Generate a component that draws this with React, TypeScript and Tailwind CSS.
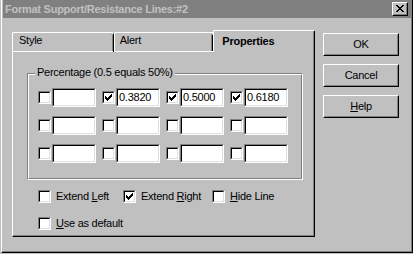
import React from 'react';

const CHECK = ['......X', '.....XX', 'X...XXX', 'XX.XXX.', 'XXXXX..', '.XXX...', '..X....'];

const CheckMark = () => (
  <svg width="7" height="7" viewBox="0 0 7 7" shapeRendering="crispEdges">
    {CHECK.flatMap((row, y) =>
      row.split('').map((c, x) =>
        c === 'X' ? <rect key={`${x}-${y}`} x={x} y={y} width="1" height="1" fill="#000" /> : null
      )
    )}
  </svg>
);

const Checkbox = ({ checked }: { checked?: boolean }) => (
  <div className="w-[13px] h-[13px] shrink-0 border border-t-[#808080] border-l-[#808080] border-r-white border-b-white">
    <div className="w-full h-full border border-t-black border-l-black border-r-[#dfdfdf] border-b-[#dfdfdf] bg-white flex items-center justify-center">
      {checked && <CheckMark />}
    </div>
  </div>
);

const Edit = ({ value }: { value?: string }) => (
  <div className="w-[44px] h-[19px] border border-t-[#808080] border-l-[#808080] border-r-white border-b-white">
    <div className="w-full h-full border border-t-black border-l-black border-r-[#dfdfdf] border-b-[#dfdfdf] bg-white pl-px text-[11px] leading-[15px]">
      {value}
    </div>
  </div>
);

const Button = ({ children }: { children: React.ReactNode }) => (
  <div className="w-[76px] h-[23px] border border-t-white border-l-white border-r-black border-b-black">
    <div className="w-full h-full border border-t-[#c0c0c0] border-l-[#c0c0c0] border-r-[#808080] border-b-[#808080] flex items-center justify-center text-[11px] leading-[13px]">
      {children}
    </div>
  </div>
);

const CheckItem = ({ checked, width, children }: { checked?: boolean; width: string; children: React.ReactNode }) => (
  <div className={`flex items-center h-[13px] ${width}`}>
    <Checkbox checked={checked} />
    <span className="ml-[5px] text-[11px] leading-[13px] whitespace-nowrap">{children}</span>
  </div>
);

const rows = [
  ['', '0.3820', '0.5000', '0.6180'],
  ['', '', '', ''],
  ['', '', '', ''],
];

export default function App() {
  return (
    <div className="w-[413px] h-[254px] bg-[#c0c0c0] text-black tracking-[-0.25px] font-['Liberation_Sans',Arial,sans-serif]">
      <div className="ml-px w-[412px] h-[253px] border-l border-l-white border-r border-r-black border-b border-b-black">
        <div className="h-full pl-px border-r border-b border-[#808080]">
          {/* title bar */}
          <div className="h-[18px] bg-[#808080] flex items-center justify-between pl-[2px] pr-[3px]">
            <span className="text-[11px] leading-[13px] font-bold text-[#c0c0c0] whitespace-nowrap">
              Format Support/Resistance Lines:#2
            </span>
            <div className="w-[16px] h-[14px] border border-t-white border-l-white border-r-black border-b-black bg-[#c0c0c0]">
              <div className="w-full h-full border-r border-b border-[#808080] flex items-center justify-center">
                <svg width="8" height="7" viewBox="0 0 8 7" shapeRendering="crispEdges">
                  <path d="M0 0h2v1h-2zM6 0h2v1h-2zM1 1h2v1h-2zM5 1h2v1h-2zM2 2h4v1h-4zM3 3h2v1h-2zM2 4h4v1h-4zM1 5h2v1h-2zM5 5h2v1h-2zM0 6h2v1h-2zM6 6h2v1h-2z" fill="#000" />
                </svg>
              </div>
            </div>
          </div>

          <div className="flex items-start">
            {/* tab control */}
            <div className="ml-[9px] mt-[12px] w-[303px]">
              <div className="flex items-end h-[22px]">
                <div className="w-[101px] h-[20px] border-l border-t border-b border-white rounded-tl-[2px] pl-[6px] pt-px text-[11px] leading-[13px]">
                  <div className="h-full border-r border-[#808080] rounded-tr-[2px] -mb-px">Style</div>
                </div>
                <div className="w-0 h-[18px] border-r border-black self-start mt-[4px]" />
                <div className="w-[100px] h-[20px] border-l border-t border-b border-white rounded-tl-[2px] pl-[5px] pt-px text-[11px] leading-[13px] flex">
                  <div className="flex-1">Alert</div>
                  <div className="w-0 border-r border-[#808080]" />
                  <div className="w-0 border-r border-black mt-px" />
                </div>
                <div className="w-[102px] h-[22px] border-l border-t border-white border-r border-r-black rounded-tl-[2px] rounded-tr-[2px]">
                  <div className="h-full border-r border-[#808080] pl-[8px] pt-[4px] text-[11px] leading-[13px] font-bold">
                    Properties
                  </div>
                </div>
              </div>
              <div className="h-[185px] border-l border-l-white border-r border-r-black border-b border-b-black">
                <div className="h-full border-r border-b border-[#808080]">
                  {/* group box */}
                  <div className="relative ml-[14px] pt-[21px]">
                    <div className="w-[276px] h-[107px] border border-t-[#808080] border-l-[#808080] border-r-white border-b-white">
                      <div className="h-full border border-t-white border-l-white border-r-[#808080] border-b-[#808080] pl-[9px] pt-[13px] flex flex-col gap-[9px]">
                        {rows.map((row, r) => (
                          <div key={r} className="flex gap-[6px]">
                            {row.map((v, c) => (
                              <div key={c} className="flex items-center gap-px">
                                <Checkbox checked={v !== ''} />
                                <Edit value={v} />
                              </div>
                            ))}
                          </div>
                        ))}
                      </div>
                    </div>
                    <span className="absolute left-[8px] top-[14px] bg-[#c0c0c0] px-[2px] text-[11px] leading-[13px] whitespace-nowrap">
                      Percentage (0.5 equals 50%)
                    </span>
                  </div>

                  <div className="ml-[25px] mt-[10px] flex">
                    <CheckItem width="w-[85px]">
                      Extend <u>L</u>eft
                    </CheckItem>
                    <CheckItem width="w-[89px]" checked>
                      Extend <u>R</u>ight
                    </CheckItem>
                    <CheckItem width="w-[80px]">
                      <u>H</u>ide Line
                    </CheckItem>
                  </div>
                  <div className="ml-[25px] mt-[14px] flex">
                    <CheckItem width="w-[120px]">
                      <u>U</u>se as default
                    </CheckItem>
                  </div>
                </div>
              </div>
            </div>

            {/* buttons */}
            <div className="ml-[8px] mt-[15px] flex flex-col gap-[8px]">
              <Button>OK</Button>
              <Button>Cancel</Button>
              <Button>
                <span>
                  <u>H</u>elp
                </span>
              </Button>
            </div>
          </div>
        </div>
      </div>
    </div>
  );
}
